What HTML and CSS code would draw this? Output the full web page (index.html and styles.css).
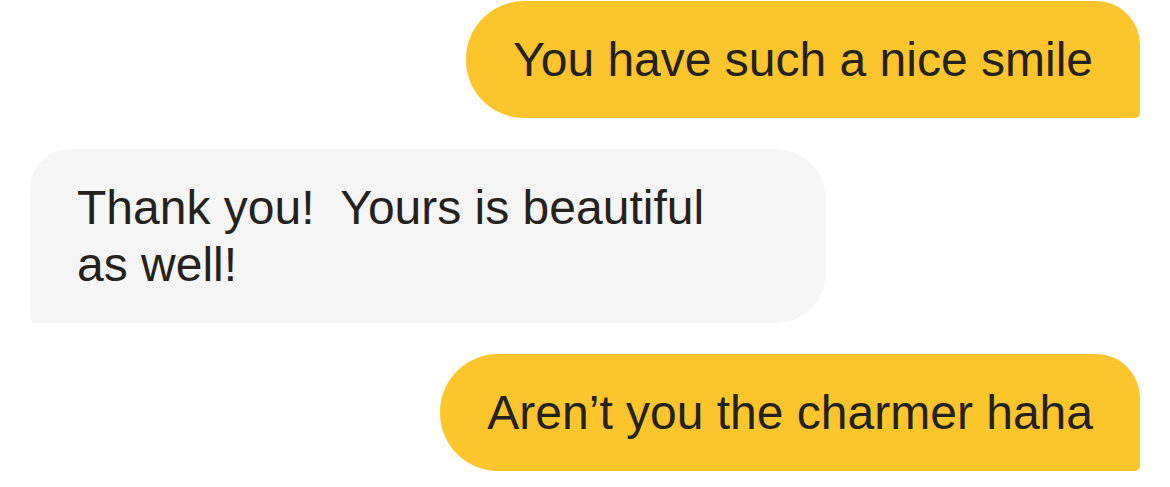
FILE: index.html
```html
<!DOCTYPE html>
<html>
<head>
<meta charset="utf-8">
<link rel="stylesheet" href="styles.css">
</head>
<body>
<div class="chat">
  <div class="bubble sent first">You have such a nice smile</div>
  <div class="bubble received">Thank you!  Yours is beautiful as well!</div>
  <div class="bubble sent">Aren’t you the charmer haha</div>
</div>
</body>
</html>
```
FILE: styles.css
```css
html, body {
  margin: 0;
  padding: 0;
  background: #ffffff;
}
.chat {
  display: flex;
  flex-direction: column;
  gap: 31px;
  padding: 1px 30px 0 30px;
  font-family: "Liberation Sans", Arial, sans-serif;
  font-size: 48px;
  line-height: 57px;
  color: #25221e;
}
.bubble {
  padding: 30px 47px;
  white-space: pre-wrap;
  box-sizing: border-box;
}
.sent {
  align-self: flex-end;
  background: #fcc52b;
  border-radius: 58px 44px 5px 58px;
}
.received {
  align-self: flex-start;
  width: 796px;
  padding-right: 100px;
  background: #f5f5f5;
  border-radius: 40px 50px 50px 6px;
}
```
